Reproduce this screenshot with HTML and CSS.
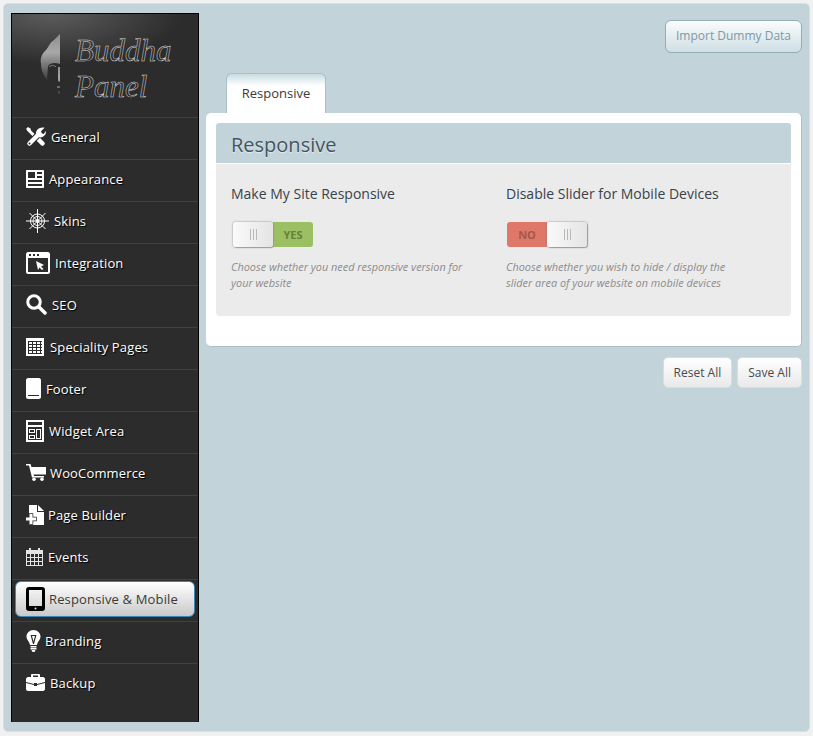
FILE: index.html
```html
<!DOCTYPE html>
<html lang="en">

<head>
    <meta charset="UTF-8">
    <title>Buddha Panel</title>
    <link rel="stylesheet" href="styles.css">
</head>

<body>
    <div class="frame">
        <!-- left menu -->
        <div class="sidebar">
            <div class="logo">
                <svg class="logo-head" width="22" height="62" viewBox="0 0 22 62">
                    <defs>
                        <linearGradient id="headfill" x1="0" y1="0" x2="0" y2="1">
                            <stop offset="0" stop-color="#8f8f8f"/>
                            <stop offset="0.4" stop-color="#a8a8a8"/>
                            <stop offset="1" stop-color="#3c3c3c"/>
                        </linearGradient>
                    </defs>
                    <path fill="url(#headfill)" d="M20 0 L20 30 C14 28 10 29 8 32 L7 46 C4 42 1 36 1 30 C0 24 2 20 5 17 C9 13 10 8 14 6 Z"/>
                    <path fill="url(#headfill)" d="M18 33 L20 33 L20 48 L18 47 Z M17 52 L20 52 L20 54 L17 54 Z M18 57 L20 57 L20 60 L18 60 Z"/>
                    <path fill="none" stroke="#8a8a8a" d="M9 33 C11 31 14 31 16 33"/>
                </svg>
                <div class="logo-text">Buddha<br>Panel</div>
            </div>
            <ul class="menu">
                <li class="menu-item">
                    <svg width="20" height="20" viewBox="0 0 20 20">
                        <path stroke="#fff" stroke-width="3" d="M2 2.500 L10 10.500"/>
                        <path fill="#fff" d="M0 2 L2 0 L5 2 L4 4 L2 4 Z"/>
                        <path stroke="#fff" stroke-width="4.500" stroke-linecap="round" d="M10 10 L16.500 16.500"/>
                        <path stroke="#2c2c2c" stroke-width="6.500" d="M6 14 L13 7"/>
                        <path stroke="#fff" stroke-width="4.500" stroke-linecap="round" d="M13 7 L3.500 16.500"/>
                        <path fill="#fff" d="M18.500 .8 L15 4.300 L15.700 6.300 L17.700 7 L20 4 C20.300 8 17 11 13 10.300 L10 8 C9 3.500 13.500 -.5 18.500 .8 Z"/>
                        <circle cx="3.500" cy="16.500" r="1" fill="#2c2c2c"/>
                    </svg>
                    <span>General</span>
                </li>
                <li class="menu-item">
                    <svg width="18" height="18" viewBox="0 0 18 18"><path fill="#fff" fill-rule="evenodd" d="M1 0 H17 C17.600 0 18 .4 18 1 V17 C18 17.600 17.600 18 17 18 H1 C.4 18 0 17.600 0 17 V1 C0 .4 .4 0 1 0 Z M2 2 V8 H9 V2 Z M11 2 V4 H16 V2 Z M11 6 V8 H16 V6 Z M2 10 V12 H16 V10 Z M2 14 V16 H16 V14 Z"/></svg>
                    <span>Appearance</span>
                </li>
                <li class="menu-item">
                    <svg width="23" height="24" viewBox="0 0 23 24"><g fill="none" stroke="#fff"><circle cx="11.500" cy="12" r="7"/><circle cx="11.500" cy="12" r="4.500"/><circle cx="11.500" cy="12" r="1.500"/><path d="M11.500 0 V24 M0 12 H23 M3.500 4 L19.500 20 M19.500 4 L3.500 20"/></g></svg>
                    <span>Skins</span>
                </li>
                <li class="menu-item">
                    <svg width="24" height="22" viewBox="0 0 24 22"><path fill="#fff" fill-rule="evenodd" d="M2 0 H22 C23 0 24 1 24 2 V20 C24 21 23 22 22 22 H2 C1 22 0 21 0 20 V2 C0 1 1 0 2 0 Z M2 6 V20 H22 V6 Z M3 2 V4 H5 V2 Z M7 2 V4 H9 V2 Z M11 2 V4 H13 V2 Z"/><path fill="#fff" d="M10 9 L18 13 L15 14.500 L17.500 17 L16 18 L13.500 15.500 L12 18 Z"/></svg>
                    <span>Integration</span>
                </li>
                <li class="menu-item">
                    <svg width="21" height="21" viewBox="0 0 21 21"><circle cx="8" cy="8" r="6.250" fill="none" stroke="#fff" stroke-width="3"/><path stroke="#fff" stroke-width="3.500" stroke-linecap="round" d="M13 13 L19 19"/></svg>
                    <span>SEO</span>
                </li>
                <li class="menu-item">
                    <svg class="wide-gap" width="18" height="18" viewBox="0 0 18 18"><rect width="18" height="18" fill="#fff"/><path stroke="#2c2c2c" fill="none" d="M2.500 3 V16 M6.500 3 V16 M10.500 3 V16 M14.500 3 V16 M2 3.500 H16 M2 6.500 H16 M2 9.500 H16 M2 12.500 H16 M2 15.500 H16"/></svg>
                    <span>Speciality Pages</span>
                </li>
                <li class="menu-item">
                    <svg width="15" height="21" viewBox="0 0 15 21"><path fill="#fff" fill-rule="evenodd" d="M2 0 H13 C14 0 15 1 15 2 V19 C15 20 14 21 13 21 H2 C1 21 0 20 0 19 V2 C0 1 1 0 2 0 Z M2 17 V18 H13 V17 Z"/></svg>
                    <span>Footer</span>
                </li>
                <li class="menu-item">
                    <svg width="18" height="22" viewBox="0 0 18 22"><path fill="#fff" fill-rule="evenodd" d="M0 0 H18 V22 H0 Z M2 2 V5 H16 V2 Z M2 7 V20 H16 V7 Z"/><path fill="#fff" fill-rule="evenodd" d="M3 9 H9 V13 H3 Z M4 10 V12 H8 V10 Z M3 15 H9 V19 H3 Z M4 16 V18 H8 V16 Z M10 9 H15 V19 H10 Z M11 10 V18 H14 V10 Z"/></svg>
                    <span>Widget Area</span>
                </li>
                <li class="menu-item tight">
                    <svg width="20" height="17" viewBox="0 0 20 17"><path fill="#fff" d="M0 0 H4.500 L5.500 3 H20 V10.500 H7.500 L8 12 H18 V13.500 H6 L3 1.500 H0 Z"/><circle cx="8" cy="15.200" r="1.800" fill="#fff"/><circle cx="16" cy="15.200" r="1.800" fill="#fff"/></svg>
                    <span>WooCommerce</span>
                </li>
                <li class="menu-item tight">
                    <svg width="18" height="20" viewBox="0 0 18 20">
                        <path fill="#fff" d="M3 0 H11 V7 H18 V20 H3 Z"/>
                        <path fill="#fff" d="M12 0 L18 6 H12 Z"/>
                        <path fill="#fff" stroke="#2c2c2c" stroke-width="1.500" paint-order="stroke" d="M3.500 9 H6.500 V12.500 H10 V15.500 H6.500 V19 H3.500 V15.500 H0 V12.500 H3.500 Z"/>
                    </svg>
                    <span>Page Builder</span>
                </li>
                <li class="menu-item">
                    <svg width="17" height="18" viewBox="0 0 17 18"><path fill="#e4e4e4" fill-rule="evenodd" d="M0 2 H3 V0 H5 V2 H12 V0 H14 V2 H17 V18 H0 Z M1 6 V9 H4 V6 Z M5 6 V9 H8 V6 Z M9 6 V9 H12 V6 Z M13 6 V9 H16 V6 Z M1 10 V13 H4 V10 Z M5 10 V13 H8 V10 Z M9 10 V13 H12 V10 Z M13 10 V13 H16 V10 Z M1 14 V17 H4 V14 Z M5 14 V17 H8 V14 Z M9 14 V17 H12 V14 Z M13 14 V17 H16 V14 Z"/></svg>
                    <span>Events</span>
                </li>
                <li class="menu-item tight active">
                    <svg width="19" height="24" viewBox="0 0 19 24"><path fill="#000" fill-rule="evenodd" d="M3 0 H16 C18 0 19 1 19 3 V21 C19 23 18 24 16 24 H3 C1 24 0 23 0 21 V3 C0 1 1 0 3 0 Z M3 3 V19 H16 V3 Z"/><circle cx="9.500" cy="21.400" r="1" fill="#ddd"/></svg>
                    <span>Responsive &amp; Mobile</span>
                </li>
                <li class="menu-item tight">
                    <svg width="15" height="22" viewBox="0 0 14 22"><path fill="#fff" fill-rule="evenodd" d="M7 0 C11 0 14 3 14 6.500 C14 10 11 11.500 10.500 15 H3.500 C3 11.500 0 10 0 6.500 C0 3 3 0 7 0 Z M4 5 L6.500 14 H7.500 L10 5 Z M5.500 6 H8.500 L7 11.500 Z"/><path fill="#fff" d="M4 16 H10 V17.500 H4 Z M4 18 H10 V19.500 H4 Z M5 20 H9 L8 22 H6 Z"/></svg>
                    <span>Branding</span>
                </li>
                <li class="menu-item">
                    <svg width="19" height="17" viewBox="0 0 19 17"><path fill="#fff" fill-rule="evenodd" d="M6 0 H13 C13.600 0 14 .4 14 1 V3 H17 C18 3 19 4 19 5 V8 L11 10 V9 H8 V10 L0 8 V5 C0 4 1 3 2 3 H5 V1 C5 .4 5.400 0 6 0 Z M7 1.500 V3 H12 V1.500 Z"/><path fill="#fff" d="M0 9 L8 11 V12 H11 V11 L19 9 V15 C19 16 18 17 17 17 H2 C1 17 0 16 0 15 Z"/></svg>
                    <span>Backup</span>
                </li>
            </ul>
        </div>

        <!-- main area -->
        <div class="main">
            <div class="top-row">
                <a class="import-btn">Import Dummy Data</a>
            </div>
            <div class="tabs">
                <div class="tab">Responsive</div>
            </div>
            <div class="panel">
                <h2 class="section-title">Responsive</h2>
                <div class="section-body">
                    <div class="option">
                        <h4>Make My Site Responsive</h4>
                        <div class="toggle">
                            <span class="knob"><i></i></span>
                            <span class="state yes">YES</span>
                        </div>
                        <p>Choose whether you need responsive version for your website</p>
                    </div>
                    <div class="option">
                        <h4>Disable Slider for Mobile Devices</h4>
                        <div class="toggle">
                            <span class="state no">NO</span>
                            <span class="knob"><i></i></span>
                        </div>
                        <p>Choose whether you wish to hide / display the slider area of your website on mobile devices</p>
                    </div>
                </div>
            </div>
            <div class="actions">
                <a class="btn">Reset All</a>
                <a class="btn">Save All</a>
            </div>
        </div>
    </div>
</body>

</html>
```
FILE: styles.css
```css
html, body {
    margin: 0;
    padding: 0;
}

body {
    background-color: #f1f1f1;
    font-family: "Open Sans", sans-serif;
    font-size: 13px;
}

.frame {
    display: flex;
    box-sizing: border-box;
    width: 807px;
    height: 729px;
    margin: 3px;
    padding: 9px 7px 9px 7px;
    background-color: #c2d4da;
    border: 1px solid #d9dedf;
    border-radius: 5px;
}

/* sidebar */
.sidebar {
    width: 188px;
    flex-shrink: 0;
    box-sizing: border-box;
    background-color: #2c2c2c;
    border: 1px solid #000;
    border-bottom: 0;
}

.logo {
    display: flex;
    height: 103px;
    box-sizing: border-box;
    padding: 19px 0 0 28px;
    background: radial-gradient(ellipse 130px 50px at 40px 0, #5c5c5c, #2c2c2c);
}

.logo-head {
    margin-top: 1px;
}

.logo-text {
    margin-left: 13px;
    color: transparent;
    font-family: "Liberation Serif", serif;
    font-style: italic;
    font-size: 31px;
    line-height: 36px;
    -webkit-text-stroke: 0.5px #d8d8d8;
}

.menu {
    list-style: none;
    margin: 0;
    padding: 0;
}

.menu-item {
    display: flex;
    align-items: center;
    gap: 5px;
    height: 42px;
    box-sizing: border-box;
    padding: 0 0 4px 14px;
    border-top: 1px solid #414141;
    color: #fff;
    letter-spacing: 0.15px;
    text-shadow: 1px 1px 1px #000;
}

.menu-item.tight {
    gap: 4px;
}

.menu-item svg.wide-gap {
    margin-right: 1px;
}

.menu-item.active {
    position: relative;
    color: #3a3a3a;
    text-shadow: none;
}

.menu-item.active::before {
    content: "";
    position: absolute;
    left: 3px;
    right: 3px;
    top: 1px;
    bottom: 4px;
    background: linear-gradient(#fff, #c9c9c9);
    border: 1px solid #3f86b8;
    border-radius: 6px;
}

.menu-item.active svg,
.menu-item.active span {
    position: relative;
}

/* main */
.main {
    flex: 1;
    margin-left: 7px;
    min-width: 0;
}

.top-row {
    display: flex;
    justify-content: flex-end;
    padding-top: 7px;
}

.import-btn {
    width: 137px;
    height: 33px;
    box-sizing: border-box;
    border: 1px solid #93aeb9;
    border-radius: 6px;
    background: linear-gradient(#fafcfc, #cfdfe5);
    color: #7d99a5;
    font-size: 12px;
    line-height: 30px;
    text-align: center;
}

.tabs {
    display: flex;
    padding: 20px 0 0 20px;
}

.tab {
    width: 100px;
    height: 40px;
    box-sizing: border-box;
    border: 1px solid #a9c0c9;
    border-bottom: 0;
    border-radius: 6px 6px 0 0;
    background: linear-gradient(#c9dce2, #fff 12px);
    color: #3a3a3a;
    line-height: 39px;
    text-align: center;
}

.panel {
    box-sizing: border-box;
    height: 234px;
    padding: 10px;
    background-color: #fff;
    border-right: 1px solid #a9c0c9;
    border-bottom: 1px solid #a9c0c9;
    border-radius: 5px;
}

.section-title {
    height: 40px;
    box-sizing: border-box;
    margin: 0;
    padding-left: 15px;
    background-color: #c2d4da;
    border-radius: 3px 3px 0 0;
    color: #46545e;
    font-size: 20px;
    font-weight: 400;
    line-height: 44px;
    text-shadow: 0 1px 1px #e4edf0;
}

.section-body {
    display: flex;
    height: 152px;
    margin-top: 1px;
    box-sizing: border-box;
    padding: 20px 15px 0;
    background-color: #ebebeb;
    border-radius: 0 0 4px 4px;
}

.option {
    flex: none;
    width: 275px;
}

.option h4 {
    margin: 0;
    color: #39424a;
    font-size: 14px;
    font-weight: 400;
    line-height: 20px;
}

.option p {
    width: 238px;
    margin: 12px 0 0;
    color: #8c8c8c;
    font-size: 10.900px;
    font-style: italic;
    line-height: 16px;
}

.toggle {
    display: flex;
    width: 80px;
    height: 25px;
    margin: 18px 0 0 2px;
}

.option:last-child .toggle {
    margin-left: 1px;
}

.knob {
    display: flex;
    align-items: center;
    justify-content: center;
    width: 40px;
    box-sizing: border-box;
    background: linear-gradient(90deg, #fafafa, #e4e4e4);
    border-radius: 3px;
    box-shadow: 0 0 2px #777, 1px 1px 1px #aaa;
    position: relative;
}

.knob i {
    width: 7px;
    height: 11px;
    background: repeating-linear-gradient(90deg, #b9b9b9 0, #b9b9b9 1px, transparent 1px, transparent 3px);
}

.state {
    width: 40px;
    font-size: 11px;
    font-weight: 700;
    line-height: 25px;
    text-align: center;
}

.yes {
    background-color: #9bbf63;
    color: #66813c;
    border-radius: 0 3px 3px 0;
}

.no {
    background-color: #e0786a;
    color: #a4574b;
    border-radius: 3px 0 0 3px;
}

.actions {
    display: flex;
    justify-content: flex-end;
    gap: 5px;
    margin-top: 10px;
}

.btn {
    height: 31px;
    box-sizing: border-box;
    padding: 0 10px;
    background: linear-gradient(#fff, #e9e9e9);
    border: 1px solid #d5dfe3;
    border-radius: 5px;
    color: #4a4a4a;
    font-size: 12px;
    line-height: 29px;
}
```
